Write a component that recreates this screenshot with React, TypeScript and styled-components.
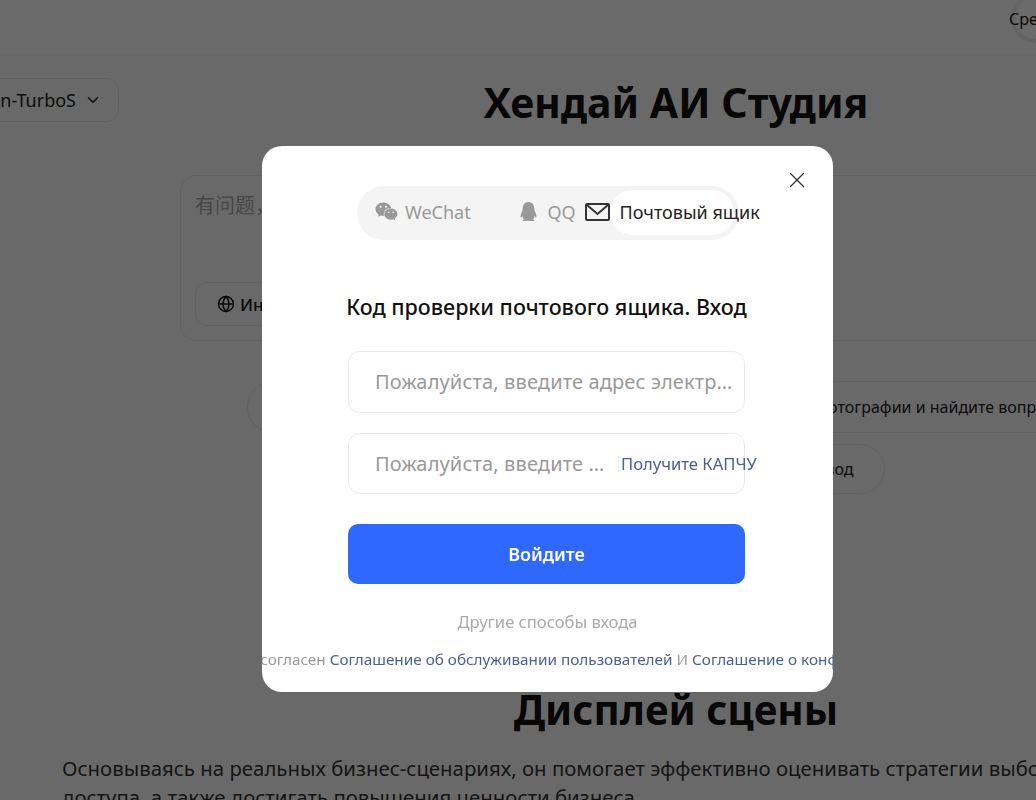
import { createGlobalStyle } from 'styled-components';
import styled from 'styled-components';
import { ChevronDown, Globe, X } from 'lucide-react';
import { FaQq, FaWeixin } from 'react-icons/fa';

const GlobalStyle = createGlobalStyle`
  html, body {
    margin: 0;
    height: 100%;
    overflow: hidden;
    background: #fbfbfb;
    font-family: 'Noto Sans', 'Noto Sans CJK SC', sans-serif;
  }
  * { box-sizing: border-box; }
`;

// страница под затемнением (шире окна, обрезается справа)
const Page = styled.div`
  width: 1352px;
  height: 800px;
  overflow: hidden;
  color: #111;
`;

const Header = styled.div`
  height: 54px;
  display: flex;
  padding-left: 1011px;
  background: #fff;
`;

const Avatar = styled.div`
  width: 50px;
  height: 50px;
  margin-top: -7px;
  border: 4px solid #eee;
  border-radius: 50%;
  padding-top: 10px;
  font-size: 16px;
  line-height: 24px;
  white-space: nowrap;
  text-indent: -6px;
`;

const TitleRow = styled.div`
  display: grid;
  grid-template-columns: 1fr auto 1fr;
  align-items: center;
  height: 96px;
`;

const ModelSelect = styled.div`
  justify-self: start;
  margin: 0 0 4px -40px;
  width: 159px;
  height: 44px;
  border: 1px solid #e6e6e6;
  border-radius: 12px;
  display: flex;
  align-items: center;
  justify-content: flex-end;
  gap: 8px;
  padding-right: 16px;
  font-size: 18px;
  white-space: nowrap;
  color: #222;
  svg { flex-shrink: 0; }
`;

const PageTitle = styled.h1`
  margin: 0;
  font-size: 41px;
  line-height: 56px;
  font-weight: 700;
  white-space: nowrap;
`;

const InputCard = styled.div`
  width: 992px;
  height: 166px;
  margin: 25px auto 0;
  border: 1px solid #e8e8e8;
  border-radius: 16px;
  padding: 15px 15px 14px 14px;
  display: flex;
  flex-direction: column;
  justify-content: space-between;
`;

const Prompt = styled.div`
  font-size: 20px;
  line-height: 30px;
  color: #aaa;
`;

const SearchToggle = styled.div`
  align-self: flex-start;
  height: 44px;
  width: 120px;
  border: 1px solid #e6e6e6;
  border-radius: 12px;
  display: flex;
  align-items: center;
  gap: 5px;
  padding-left: 21px;
  font-size: 17px;
  font-weight: 500;
  white-space: nowrap;
  svg { flex-shrink: 0; }
`;

const ChipRow = styled.div<{ $top: number }>`
  display: flex;
  justify-content: center;
  gap: 12px;
  margin-top: ${(p) => p.$top}px;
`;

const Chip = styled.div<{ $width: number; $height: number; $inset?: number }>`
  width: ${(p) => p.$width}px;
  height: ${(p) => p.$height}px;
  padding-right: ${(p) => p.$inset ?? 0}px;
  border: 1px solid #e6e6e6;
  border-radius: ${(p) => p.$height / 2}px;
  display: flex;
  align-items: center;
  justify-content: center;
  font-size: 16px;
  white-space: nowrap;
  color: #222;
`;

const SectionTitle = styled.h2`
  margin: 188px 0 0;
  text-align: center;
  font-size: 40.4px;
  line-height: 56px;
  font-weight: 700;
`;

const SectionText = styled.p`
  margin: 16px 0 0 62px;
  font-size: 20.4px;
  line-height: 29px;
  white-space: nowrap;
  color: #333;
`;

const Overlay = styled.div`
  position: fixed;
  inset: 0;
  background: rgba(0, 0, 0, 0.58);
  padding: 146px 0 0 262px;
`;

const Modal = styled.div`
  position: relative;
  width: 571px;
  height: 546px;
  background: #fff;
  border-radius: 20px;
  overflow: hidden;
  display: flex;
  flex-direction: column;
  align-items: center;
  padding-top: 40px;
`;

const CloseButton = styled.div`
  position: absolute;
  top: 21px;
  right: 23px;
  display: flex;
  color: #333;
`;

const Tabs = styled.div`
  width: 382px;
  height: 54px;
  padding: 4px;
  border-radius: 27px;
  background: #f4f4f4;
  display: grid;
  grid-template-columns: repeat(3, 1fr);
  flex-shrink: 0;
`;

const Tab = styled.div<{ $active?: boolean; $gap: number }>`
  min-width: 0;
  height: 45px;
  padding-bottom: 2px;
  border-radius: 23px;
  background: ${(p) => (p.$active ? '#fff' : 'transparent')};
  color: ${(p) => (p.$active ? '#222' : '#999')};
  display: flex;
  align-items: center;
  justify-content: center;
  gap: ${(p) => p.$gap}px;
  font-size: 18px;
  white-space: nowrap;
  svg { flex-shrink: 0; }
`;

const ModalTitle = styled.div`
  margin: 52px 2px 0 0;
  font-size: 21.5px;
  line-height: 30px;
  font-weight: 500;
  white-space: nowrap;
  color: #111;
`;

const Form = styled.div`
  width: 397px;
  margin: 29px 2px 0 0;
  display: flex;
  flex-direction: column;
  gap: 20px;
`;

const Field = styled.div`
  height: 61.5px;
  border: 1px solid #eaeaea;
  border-radius: 12px;
  display: flex;
  align-items: center;
  padding-left: 26px;
`;

const FieldInput = styled.input`
  flex: 1;
  min-width: 0;
  border: none;
  outline: none;
  padding: 0 10px 0 0;
  background: transparent;
  font: inherit;
  font-size: 20px;
  letter-spacing: 0.15px;
  text-overflow: ellipsis;
  &::placeholder {
    color: #999;
    opacity: 1;
  }
`;

const CodeLink = styled.div`
  flex: 0 0 126px;
  min-width: 0;
  margin-top: 2px;
  border-left: 1px solid #f0f0f0;
  padding-left: 2px;
  font-size: 16.6px;
  line-height: 18px;
  white-space: nowrap;
  color: #4a6193;
`;

const SubmitButton = styled.button`
  width: 397px;
  height: 60px;
  margin: 30px 2px 0 0;
  flex-shrink: 0;
  border: none;
  border-radius: 10px;
  background: #2f68ff;
  color: #fff;
  font: inherit;
  font-size: 18px;
  font-weight: 600;
`;

const OtherWays = styled.div`
  margin-top: 26px;
  font-size: 16.6px;
  line-height: 24px;
  color: #aaa;
`;

const Agreement = styled.div`
  margin: 14px 0 0 26px;
  font-size: 15.3px;
  line-height: 22px;
  white-space: nowrap;
  color: #999;
`;

const AgreementLink = styled.span`
  color: #4a6193;
`;

function MailIcon() {
  return (
    <svg width="25" height="18" viewBox="0 0 25 18" fill="none" stroke="#333" strokeWidth="2">
      <rect x="1" y="1" width="23" height="16" rx="1" />
      <path d="M2 2l10.5 9L23 2" />
    </svg>
  );
}

export default function App() {
  return (
    <>
      <GlobalStyle />
      <Page>
        <Header>
          <Avatar>Среда</Avatar>
        </Header>
        <TitleRow>
          <ModelSelect>
            Hunyuan-TurboS
            <ChevronDown size={18} />
          </ModelSelect>
          <PageTitle>Хендай АИ Студия</PageTitle>
        </TitleRow>
        <InputCard>
          <Prompt>有问题，尽管问</Prompt>
          <SearchToggle>
            <Globe size={18} />
            Интернет
          </SearchToggle>
        </InputCard>
        <ChipRow $top={40}>
          <Chip $width={420} $height={52} />
          <Chip $width={426} $height={52}>Посмотрите фотографии и найдите вопросы</Chip>
        </ChipRow>
        <ChipRow $top={11}>
          <Chip $width={284} $height={50} />
          <Chip $width={122} $height={50} $inset={8}>Перевод</Chip>
        </ChipRow>
        <SectionTitle>Дисплей сцены</SectionTitle>
        <SectionText>
          Основываясь на реальных бизнес-сценариях, он помогает эффективно оценивать стратегии выбора модели и
          <br />
          доступа, а также достигать повышения ценности бизнеса.
        </SectionText>
      </Page>
      <Overlay>
        <Modal>
          <CloseButton>
            <X size={26} strokeWidth={1.2} />
          </CloseButton>
          <Tabs>
            <Tab $gap={7}>
              <FaWeixin size={23} />
              WeChat
            </Tab>
            <Tab $gap={9}>
              <FaQq size={19} />
              QQ
            </Tab>
            <Tab $active $gap={10}>
              <MailIcon />
              Почтовый ящик
            </Tab>
          </Tabs>
          <ModalTitle>Код проверки почтового ящика. Вход</ModalTitle>
          <Form>
            <Field>
              <FieldInput placeholder="Пожалуйста, введите адрес электронной почты" />
            </Field>
            <Field>
              <FieldInput placeholder="Пожалуйста, введите код проверки" />
              <CodeLink>Получите КАПЧУ</CodeLink>
            </Field>
          </Form>
          <SubmitButton>Войдите</SubmitButton>
          <OtherWays>Другие способы входа</OtherWays>
          <Agreement>
            Я прочитал и согласен <AgreementLink>Соглашение об обслуживании пользователей</AgreementLink> И{' '}
            <AgreementLink>Соглашение о конфиденциальности</AgreementLink>
          </Agreement>
        </Modal>
      </Overlay>
    </>
  );
}
